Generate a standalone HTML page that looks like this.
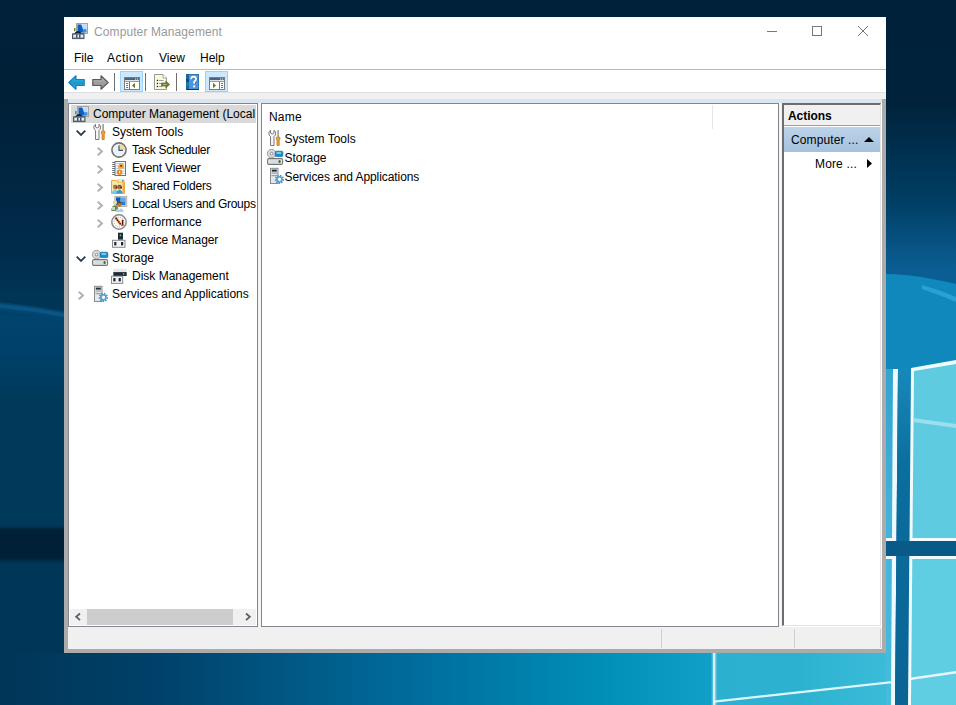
<!DOCTYPE html>
<html><head><meta charset="utf-8">
<style>
*{margin:0;padding:0;box-sizing:border-box}
html,body{width:956px;height:705px;overflow:hidden}
body{position:relative;font-family:"Liberation Sans",sans-serif;font-size:12px;color:#000;background:#003a5a}
.a{position:absolute}
.t{position:absolute;white-space:nowrap;line-height:14px;height:14px}
svg.i{position:absolute;overflow:visible}
</style></head><body>
<!-- BACKGROUND -->
<svg class="a" style="left:0;top:0" width="956" height="705" viewBox="0 0 956 705">
<defs>
<linearGradient id="gl" x1="0" y1="0" x2="0" y2="705" gradientUnits="userSpaceOnUse">
<stop offset="0" stop-color="#00213a"/>
<stop offset="0.142" stop-color="#002038"/>
<stop offset="0.355" stop-color="#002c4c"/>
<stop offset="0.43" stop-color="#003556"/>
<stop offset="0.45" stop-color="#00446e"/>
<stop offset="0.5" stop-color="#00406a"/>
<stop offset="0.567" stop-color="#003a5a"/>
<stop offset="0.745" stop-color="#003a5a"/>
<stop offset="0.752" stop-color="#002038"/>
<stop offset="0.79" stop-color="#002038"/>
<stop offset="0.8" stop-color="#003658"/>
<stop offset="1" stop-color="#003658"/>
</linearGradient>
<linearGradient id="gb" x1="0" y1="0" x2="886" y2="0" gradientUnits="userSpaceOnUse">
<stop offset="0" stop-color="#003658"/>
<stop offset="0.169" stop-color="#004068"/>
<stop offset="0.463" stop-color="#006c9c"/>
<stop offset="0.688" stop-color="#0090b8"/>
<stop offset="0.8036" stop-color="#10a0c8"/>
<stop offset="0.806" stop-color="#2cb0d0"/>
<stop offset="0.903" stop-color="#2cb2d0"/>
<stop offset="1" stop-color="#3abcd8"/>
</linearGradient>
<linearGradient id="gr" x1="0" y1="0" x2="0" y2="705" gradientUnits="userSpaceOnUse">
<stop offset="0" stop-color="#00213a"/>
<stop offset="0.142" stop-color="#00223a"/>
<stop offset="0.284" stop-color="#003e64"/>
<stop offset="0.37" stop-color="#0a5a8e"/>
<stop offset="0.39" stop-color="#0a5e94"/>
<stop offset="1" stop-color="#0a5e94"/>
</linearGradient>
<linearGradient id="lp" x1="0" y1="369" x2="0" y2="705" gradientUnits="userSpaceOnUse"><stop offset="0" stop-color="#34a4d0"/><stop offset="0.5" stop-color="#44b4dc"/><stop offset="1" stop-color="#48bcdc"/></linearGradient>
<linearGradient id="gap" x1="0" y1="369" x2="0" y2="705" gradientUnits="userSpaceOnUse"><stop offset="0" stop-color="#1888b8"/><stop offset="0.3" stop-color="#0a6e9e"/><stop offset="1" stop-color="#0a6494"/></linearGradient>
</defs>
<rect x="0" y="0" width="956" height="705" fill="#00213a"/>
<rect x="0" y="0" width="64" height="705" fill="url(#gl)"/>
<path d="M0 302 Q32 305 64 311 L64 320 Q32 314 0 311Z" fill="#00466e"/>
<path d="M0 304 Q32 307 64 313 L64 317 Q32 311 0 308Z" fill="#0a5584"/>
<path d="M0 290 L64 290 L64 311 Q32 305 0 302Z" fill="#003556"/>
<rect x="0" y="653" width="886" height="52" fill="url(#gb)"/>
<rect x="886" y="0" width="70" height="705" fill="url(#gr)"/>
<!-- streak on right -->
<path d="M886 274 Q915 274 956 284 L956 369 L886 369Z" fill="#1088bc"/>
<path d="M922 285 Q940 290 956 297 L956 302 Q940 295 922 289Z" fill="#30a8d8" opacity="0.8"/>
<!-- logo: left pane strip -->
<path d="M886 369 L895 369 L892 705 L886 705Z" fill="url(#lp)"/>
<path d="M893 369 L898 369 L895 705 L891 705Z" fill="#eefaff"/>
<!-- dark gap -->
<path d="M898 369 L911 369 L908 705 L895 705Z" fill="url(#gap)"/>
<!-- right panes -->
<path d="M911 368 L956 360 L956 541 L909.5 541Z" fill="#f0fbff"/>
<path d="M914 371 L956 364 L956 538 L912.5 538Z" fill="#5ecbe0"/>
<path d="M909.3 556 L956 556 L956 705 L908 705Z" fill="#f0fbff"/>
<path d="M912.3 559 L956 559 L956 705 L911 705Z" fill="#5fcde2"/>
<path d="M913 418 L956 424 L956 428 L913 422Z" fill="#a8e4f0" opacity="0.8"/>
<path d="M911 677.5 L956 671 L956 673.5 L911 680Z" fill="#e8f8ff"/>
<path d="M886 538 L895.6 538 L895.6 541 L886 541Z" fill="#eefaff"/>
<path d="M886 556 L895.6 556 L895.6 559 L886 559Z" fill="#eefaff"/>
<rect x="886" y="541" width="70" height="15" fill="#0a5a88"/>
<!-- bottom lines -->
<rect x="713" y="653" width="2.2" height="52" fill="#e0f6ff"/><rect x="711.5" y="653" width="5.2" height="52" fill="#c0ecf8" opacity="0.35"/>
<path d="M714 700.6 L892 681 L892 683.2 L714 702.8Z" fill="#e0f6ff"/>
</svg>

<!-- WINDOW -->
<div class="a" style="left:64px;top:17px;width:822px;height:636px;background:#fff"></div>
<!-- title -->
<svg class="i" style="left:72px;top:23px" width="16" height="16" viewBox="0 0 16 16">
<rect x="4.5" y="0.5" width="11" height="10" fill="#e4e0dc" stroke="#aaa29a"/>
<rect x="5.5" y="1.5" width="9" height="8" fill="#b4e2fa"/>
<path d="M5.5 1.5H9.2L12.2 9.5H5.5Z" fill="#0c5cc6"/>
<rect x="10.8" y="6.2" width="3.7" height="3.3" fill="#3890e0"/>
<rect x="2" y="5" width="1.5" height="3.2" fill="#6a8a3a"/>
<path d="M2.6 11.2Q6 6.6 9.4 11.2" stroke="#0a1a30" stroke-width="1.7" fill="none"/>
<rect x="0.5" y="10.8" width="11.5" height="4.8" fill="#9aa6b0" stroke="#4c5660"/>
<rect x="1.5" y="12" width="9.5" height="2.2" fill="#e6ecf0"/>
<rect x="4.1" y="11.6" width="1.3" height="3.2" fill="#1e4262"/><rect x="7.1" y="11.6" width="1.3" height="3.2" fill="#1e4262"/>
</svg>
<div class="t" style="left:94px;top:25px;color:#999;letter-spacing:0.1px">Computer Management</div>
<!-- caption buttons -->
<div class="a" style="left:767px;top:31px;width:10px;height:1px;background:#777"></div>
<div class="a" style="left:812px;top:26px;width:10px;height:10px;border:1px solid #777"></div>
<svg class="i" style="left:858px;top:26px" width="10" height="10"><path d="M0 0L10 10M10 0L0 10" stroke="#777" stroke-width="1"/></svg>
<!-- menu -->
<div class="t" style="left:74px;top:51px">File</div>
<div class="t" style="left:107px;top:51px;letter-spacing:0.5px">Action</div>
<div class="t" style="left:159px;top:51px">View</div>
<div class="t" style="left:200px;top:51px">Help</div>
<div class="a" style="left:64px;top:69px;width:822px;height:1px;background:#b9b9b9"></div>
<!-- toolbar -->
<svg class="i" style="left:68px;top:75px" width="17" height="15" viewBox="0 0 17 15">
<defs><linearGradient id="ba" x1="0" y1="0" x2="0" y2="1"><stop offset="0" stop-color="#40b8e0"/><stop offset="0.6" stop-color="#1898c8"/><stop offset="1" stop-color="#58c4ec"/></linearGradient></defs>
<path d="M0.8 7.5L8 0.8V4.5H16.2V10.5H8V14.2Z" fill="url(#ba)" stroke="#1a7cc8" stroke-width="1.2" stroke-linejoin="round"/>
</svg>
<svg class="i" style="left:92px;top:75px" width="17" height="15" viewBox="0 0 17 15">
<defs><linearGradient id="fa" x1="0" y1="0" x2="0" y2="1"><stop offset="0" stop-color="#b4b4b4"/><stop offset="1" stop-color="#8c8c8c"/></linearGradient></defs>
<path d="M16.2 7.5L9 0.8V4.5H0.8V10.5H9V14.2Z" fill="url(#fa)" stroke="#5a5a5a" stroke-width="1.2" stroke-linejoin="round"/>
</svg>
<div class="a" style="left:114px;top:73px;width:1px;height:18px;background:#6e6e6e"></div>
<div class="a" style="left:120px;top:71px;width:23px;height:21px;background:#cce8ff;border:1px solid #99d1ff"></div>
<svg class="i" style="left:124px;top:77px" width="16" height="13" viewBox="0 0 16 13">
<rect x="0.5" y="0.5" width="15" height="12" fill="#fff" stroke="#7c7c7c"/>
<rect x="1" y="1" width="14" height="2" fill="#4e6280"/>
<rect x="11" y="1.5" width="1.2" height="1" fill="#e8eef4"/><rect x="13" y="1.5" width="1.2" height="1" fill="#e8eef4"/>
<rect x="1" y="3" width="14" height="1" fill="#dde4ea"/>
<rect x="1" y="4" width="14" height="1" fill="#9a9a9a"/>
<rect x="5" y="5" width="1" height="7" fill="#5a78a0"/>
<rect x="2" y="6" width="2.2" height="1.1" rx="0.5" fill="#3a7896"/>
<rect x="2" y="8" width="2.2" height="1.1" rx="0.5" fill="#3a7896"/>
<rect x="2" y="10" width="2.2" height="1.1" rx="0.5" fill="#3a7896"/>
<path d="M8 8.5L11 5.7V11.3Z" fill="#687a1e"/>
</svg>
<div class="a" style="left:145px;top:73px;width:1px;height:18px;background:#6e6e6e"></div>
<svg class="i" style="left:154px;top:74px" width="16" height="16" viewBox="0 0 16 16">
<path d="M0.5 0.5H9L12.5 4V15.5H0.5Z" fill="#fcf9de" stroke="#9a9a94"/>
<path d="M9 0.5V4H12.5" fill="#fff" stroke="#a0a4b0"/>
<rect x="2.8" y="5.8" width="1.3" height="1.3" fill="#1a1e2a"/><rect x="2.8" y="8.8" width="1.3" height="1.3" fill="#1a1e2a"/><rect x="2.8" y="11.8" width="1.3" height="1.3" fill="#1a1e2a"/>
<path d="M5 6.5H9.5M5 9.5H8.5M5 12.5H8.5" stroke="#8a96a4" stroke-width="0.9"/>
<path d="M7.5 9H11.8V7L15.8 10.5L11.8 14V12H7.5Z" fill="#6e7e2a" stroke="#5a6a1c" stroke-width="0.6"/>
<rect x="9" y="10" width="3.5" height="1" fill="#b0b8a0"/>
</svg>
<div class="a" style="left:176px;top:73px;width:1px;height:18px;background:#6e6e6e"></div>
<svg class="i" style="left:186px;top:74px" width="13" height="16" viewBox="0 0 13 16">
<rect x="0" y="0" width="13" height="16" fill="#1a64a8"/>
<rect x="3" y="0.6" width="9.4" height="14.6" fill="#4a96dc"/>
<rect x="0" y="5" width="3" height="3" fill="#0a4a98"/>
<rect x="0" y="8" width="3" height="4" fill="#1a7aa0"/>
<rect x="0" y="15" width="13" height="1" fill="#0a3a70"/>
<path d="M5.2 5.2Q5.2 2.6 7.6 2.6Q10.1 2.6 10.1 5Q10.1 6.6 8.2 7.8V9.8" stroke="#5a6a80" stroke-width="1.8" fill="none" transform="translate(0.6 0.4)"/>
<path d="M5.2 5.2Q5.2 2.6 7.6 2.6Q10.1 2.6 10.1 5Q10.1 6.6 8.2 7.8V9.8" stroke="#fff" stroke-width="1.7" fill="none"/>
<rect x="7.2" y="11.4" width="2" height="2" fill="#fff"/>
</svg>
<div class="a" style="left:205px;top:71px;width:23px;height:21px;background:#cce8ff;border:1px solid #99d1ff"></div>
<svg class="i" style="left:209px;top:77px" width="16" height="13" viewBox="0 0 16 13">
<rect x="0.5" y="0.5" width="15" height="12" fill="#fff" stroke="#7c7c7c"/>
<rect x="1" y="1" width="14" height="2" fill="#4e6280"/>
<rect x="11" y="1.5" width="1.2" height="1" fill="#e8eef4"/><rect x="13" y="1.5" width="1.2" height="1" fill="#e8eef4"/>
<rect x="1" y="3" width="14" height="1" fill="#dde4ea"/>
<rect x="1" y="4" width="14" height="1" fill="#9a9a9a"/>
<rect x="10" y="5" width="1" height="7" fill="#5a78a0"/>
<rect x="12" y="6" width="2.2" height="1.1" rx="0.5" fill="#3a7896"/>
<rect x="12" y="8" width="2.2" height="1.1" rx="0.5" fill="#3a7896"/>
<rect x="12" y="10" width="2.2" height="1.1" rx="0.5" fill="#3a7896"/>
<path d="M4 5.7L7 8.5L4 11.3Z" fill="#687a1e"/>
</svg>
<div class="a" style="left:64px;top:92px;width:822px;height:1px;background:#e0e0e0"></div>
<div class="a" style="left:64px;top:93px;width:822px;height:6px;background:#f0f0f0"></div>
<!-- frame -->
<div class="a" style="left:64px;top:99px;width:822px;height:554px;background:#ababab"></div>
<div class="a" style="left:68px;top:99px;width:814px;height:4px;background:#dbe5ef"></div>
<div class="a" style="left:68px;top:103px;width:814px;height:546px;background:#f0f0f0"></div>
<div class="a" style="left:259px;top:103px;width:1px;height:524px;background:#fafafa"></div>
<div class="a" style="left:780px;top:103px;width:1px;height:524px;background:#fafafa"></div>
<!-- tree panel -->
<div class="a" style="left:68px;top:103px;width:190px;height:524px;border:1px solid #828790;background:#fff"></div>
<!-- middle panel -->
<div class="a" style="left:261px;top:103px;width:518px;height:524px;border:1px solid #828790;background:#fff"></div>
<!-- actions panel -->
<div class="a" style="left:782px;top:103px;width:100px;height:524px;background:#fff"></div>
<div class="a" style="left:782px;top:103px;width:99px;height:523px;border-left:2px solid #6d6d6d;border-top:2px solid #6d6d6d;border-right:1px solid #e3e3e3;border-bottom:1px solid #e3e3e3;background:#fff"></div>
<!-- status bar -->
<div class="a" style="left:68px;top:627px;width:814px;height:22px;background:#f0f0f0"></div>
<div class="a" style="left:661px;top:629px;width:1px;height:19px;background:#cfcfcf"></div>
<div class="a" style="left:794px;top:629px;width:1px;height:19px;background:#cfcfcf"></div>
<div class="a" style="left:880px;top:629px;width:1px;height:19px;background:#cfcfcf"></div>

<!-- tree items -->
<div class="a" style="left:70px;top:104px;width:186px;height:521px;overflow:hidden">
<div class="a" style="left:1px;top:1px;width:185px;height:18px;background:#d9d9d9"></div>
</div>
<div class="a" style="left:70px;top:104px;width:186px;height:505px;overflow:hidden">
<div class="t" style="left:23px;top:3px">Computer Management (Local</div>
<div class="t" style="left:42px;top:21px">System Tools</div>
<div class="t" style="left:62px;top:39px;letter-spacing:-0.3px">Task Scheduler</div>
<div class="t" style="left:62px;top:57px;letter-spacing:-0.16px">Event Viewer</div>
<div class="t" style="left:62px;top:75px;letter-spacing:-0.18px">Shared Folders</div>
<div class="t" style="left:62px;top:93px;letter-spacing:-0.26px">Local Users and Groups</div>
<div class="t" style="left:62px;top:111px;letter-spacing:0.1px">Performance</div>
<div class="t" style="left:62px;top:129px;letter-spacing:-0.08px">Device Manager</div>
<div class="t" style="left:42px;top:147px">Storage</div>
<div class="t" style="left:62px;top:165px">Disk Management</div>
<div class="t" style="left:42px;top:183px">Services and Applications</div>
</div>

<!-- tree icons -->
<svg class="i" style="left:73px;top:106px" width="16" height="16" viewBox="0 0 16 16">
<rect x="4.5" y="0.5" width="11" height="10" fill="#e4e0dc" stroke="#aaa29a"/>
<rect x="5.5" y="1.5" width="9" height="8" fill="#b4e2fa"/>
<path d="M5.5 1.5H9.2L12.2 9.5H5.5Z" fill="#0c5cc6"/>
<rect x="10.8" y="6.2" width="3.7" height="3.3" fill="#3890e0"/>
<rect x="2" y="5" width="1.5" height="3.2" fill="#6a8a3a"/>
<path d="M2.6 11.2Q6 6.6 9.4 11.2" stroke="#0a1a30" stroke-width="1.7" fill="none"/>
<rect x="0.5" y="10.8" width="11.5" height="4.8" fill="#9aa6b0" stroke="#4c5660"/>
<rect x="1.5" y="12" width="9.5" height="2.2" fill="#e6ecf0"/>
<rect x="4.1" y="11.6" width="1.3" height="3.2" fill="#1e4262"/><rect x="7.1" y="11.6" width="1.3" height="3.2" fill="#1e4262"/>
</svg>
<!-- chevron down system tools -->
<svg class="i" style="left:76px;top:130px" width="10" height="6" viewBox="0 0 10 6"><path d="M0.7 0.7L5 5L9.3 0.7" stroke="#2b3d4f" stroke-width="1.8" fill="none"/></svg>
<!-- wrench -->
<svg class="i" style="left:93px;top:124px" width="16" height="16" viewBox="0 0 16 16">
<path d="M2.5 15.5V6.5Q0.8 5.5 0.8 3.2Q0.8 1.2 2.5 0.3V3L4.2 4L6 3V0.3Q7.7 1.2 7.7 3.2Q7.7 5.5 6 6.5V15.5Z" fill="#f4f4f4" stroke="#7a7a7a" stroke-width="1"/>
<rect x="9.5" y="0" width="1.2" height="7" fill="#7a7a7a"/>
<path d="M8.3 7.2H11.9V9.5L11.2 10V15.5H9V10L8.3 9.5Z" fill="#f0a030" stroke="#c87818" stroke-width="0.8"/>
</svg>
<!-- chevron right (grey) task scheduler -->
<svg class="i" style="left:97px;top:147px" width="6" height="9" viewBox="0 0 6 9"><path d="M0.7 0.7L5 4.5L0.7 8.3" stroke="#b0b0b0" stroke-width="1.9" fill="none"/></svg>
<svg class="i" style="left:111px;top:142px" width="16" height="16" viewBox="0 0 16 16">
<circle cx="8" cy="8" r="7.1" fill="#eaf2fa" stroke="#737373" stroke-width="1.6"/>
<path d="M8 8V2A6 6 0 0 1 14 8Z" fill="#f2dc90"/>
<path d="M8 3.5V8.3H12" stroke="#3a5a80" stroke-width="1.2" fill="none"/>
</svg>
<svg class="i" style="left:97px;top:165px" width="6" height="9" viewBox="0 0 6 9"><path d="M0.7 0.7L5 4.5L0.7 8.3" stroke="#b0b0b0" stroke-width="1.9" fill="none"/></svg>
<svg class="i" style="left:111px;top:160px" width="16" height="16" viewBox="0 0 16 16">
<rect x="3.5" y="1" width="11.5" height="15" fill="#5a7a9c"/>
<rect x="4.5" y="2" width="9.5" height="13" fill="#f4f8fc"/>
<path d="M5 3.5H13.5M5 6H13.5M5 8.5H13.5M5 11H13.5M5 13.5H13.5" stroke="#b8d4ec" stroke-width="1.1"/>
<path d="M1.2 2.5H4M1.2 4.5H4M1.2 6.5H4M1.2 8.5H4M1.2 10.5H4M1.2 12.5H4M1.2 14.5H4" stroke="#6a6e72" stroke-width="1.1"/>
<path d="M7 8.6Q7 3 10.2 3Q13.2 3 13.2 8.6Z" fill="#f0a838"/>
<circle cx="10.2" cy="5.8" r="0.9" fill="#5a0a10"/>
<circle cx="8.6" cy="12.2" r="2.7" fill="#e88418"/>
<rect x="8.1" y="11" width="1.1" height="2.4" fill="#f8f8ff"/>
</svg>
<svg class="i" style="left:97px;top:183px" width="6" height="9" viewBox="0 0 6 9"><path d="M0.7 0.7L5 4.5L0.7 8.3" stroke="#b0b0b0" stroke-width="1.9" fill="none"/></svg>
<svg class="i" style="left:111px;top:178px" width="16" height="16" viewBox="0 0 16 16">
<path d="M0.5 2.5H5.5L6.5 4H13.5V15.5H0.5Z" fill="#f8e6a8" stroke="#e8a848"/>
<rect x="6.5" y="1.5" width="7" height="2.8" fill="#f4c060"/>
<rect x="8" y="2.3" width="3" height="1.2" fill="#fff"/><rect x="11" y="2.3" width="1.5" height="1.2" fill="#2a80d8"/>
<rect x="11.5" y="5" width="1.5" height="10" fill="#f0b050"/>
<circle cx="4.2" cy="9.6" r="2" fill="#b07828"/>
<path d="M2.2 8.4Q4 6.4 6 8" stroke="#707880" stroke-width="1.2" fill="none"/>
<circle cx="5.8" cy="9.5" r="0.9" fill="#6a0a20"/>
<circle cx="8.4" cy="9.6" r="2" fill="#b07828"/>
<path d="M6.6 8.4Q8.4 6.4 10.4 8" stroke="#505860" stroke-width="1.2" fill="none"/>
<circle cx="10.2" cy="9.5" r="0.9" fill="#6a0a20"/>
<path d="M1 15.5Q1 12 4.2 12Q7 12 7 15.5Z" fill="#7ac8e8"/>
<path d="M5.5 15.5Q5.5 12 8.5 12Q11.5 12 11.5 15.5Z" fill="#3a98d0"/>
</svg>
<svg class="i" style="left:97px;top:201px" width="6" height="9" viewBox="0 0 6 9"><path d="M0.7 0.7L5 4.5L0.7 8.3" stroke="#b0b0b0" stroke-width="1.9" fill="none"/></svg>
<svg class="i" style="left:111px;top:196px" width="16" height="16" viewBox="0 0 16 16">
<rect x="3.8" y="0.4" width="12" height="10" fill="#d4d4d0" stroke="#a8a8a4" stroke-width="0.8"/>
<rect x="5" y="1.6" width="9.6" height="7.6" fill="#5aa8e8"/>
<path d="M5 1.6H9.5L8 9.2H5Z" fill="#0a58c0"/>
<rect x="10" y="6" width="4" height="3" fill="#2a78d8"/>
<circle cx="4" cy="6.4" r="2.2" fill="#f0d890"/>
<path d="M0.3 15Q0.3 9.6 4 9.6Q7 9.6 7.2 13V15Z" fill="#6a8a48"/>
<rect x="1" y="11" width="3" height="3" fill="#c8d0c8"/>
<circle cx="8.4" cy="8.6" r="2.3" fill="#c87828"/>
<path d="M6.2 7.6Q8 5.2 10.4 7" stroke="#4a4a40" stroke-width="1.4" fill="none"/>
<path d="M4.6 16Q4.6 12.2 8.6 12.2Q12.6 12.2 12.6 16Z" fill="#a8d0f0"/>
<path d="M7.6 12.2L8.6 14.5L9.6 12.2Z" fill="#fff"/>
</svg>
<svg class="i" style="left:97px;top:219px" width="6" height="9" viewBox="0 0 6 9"><path d="M0.7 0.7L5 4.5L0.7 8.3" stroke="#b0b0b0" stroke-width="1.9" fill="none"/></svg>
<svg class="i" style="left:111px;top:214px" width="16" height="16" viewBox="0 0 16 16">
<circle cx="8" cy="8" r="7.2" fill="#fbfbfb" stroke="#8a8a8a" stroke-width="1.5"/>
<circle cx="8" cy="8" r="4.8" fill="none" stroke="#9aa0a8" stroke-width="1" stroke-dasharray="0.9 1.2"/>
<path d="M4.4 3.2L9.8 10.6" stroke="#f09020" stroke-width="2.4"/>
<path d="M4.8 3.8L9.6 10.4" stroke="#5a0c10" stroke-width="1.4" stroke-dasharray="1.6 0.6"/>
<path d="M11.6 5.8V11.2H10.4" stroke="#5a0c10" stroke-width="1.5" fill="none"/>
<rect x="10.2" y="10.6" width="1.5" height="1.2" fill="#f09020"/>
</svg>
<svg class="i" style="left:111px;top:232px" width="16" height="16" viewBox="0 0 16 16">
<rect x="7" y="0.7" width="5" height="7" fill="#1e2c3c"/>
<circle cx="9.4" cy="3.4" r="0.8" fill="#a8d040"/>
<rect x="1.5" y="8.3" width="12.5" height="7" fill="#f2f4f6" stroke="#8a8a8a"/>
<rect x="3.2" y="10" width="2.2" height="3.4" fill="#1a2838"/>
<rect x="10" y="10" width="2.2" height="3.4" fill="#1a2838"/>
</svg>
<!-- storage chevron down -->
<svg class="i" style="left:76px;top:256px" width="10" height="6" viewBox="0 0 10 6"><path d="M0.7 0.7L5 5L9.3 0.7" stroke="#2b3d4f" stroke-width="1.8" fill="none"/></svg>
<svg class="i" style="left:92px;top:250px" width="16" height="16" viewBox="0 0 16 16">
<circle cx="4.6" cy="4.6" r="4.3" fill="#d8d8d8" stroke="#9a9a9a" stroke-width="0.9"/>
<circle cx="4.6" cy="4.6" r="1.3" fill="#fff" stroke="#505860" stroke-width="0.6"/>
<rect x="8.2" y="2.2" width="7.6" height="5.4" rx="1.2" fill="#1a8ec8" stroke="#0a68a0" stroke-width="0.7"/>
<rect x="9.5" y="3.2" width="4.5" height="1.6" fill="#8ad8f8"/>
<rect x="0.6" y="9.6" width="15" height="5.8" rx="1.4" fill="#e4eaf0" stroke="#747474" stroke-width="1.1"/>
<rect x="2.5" y="11" width="9" height="3" fill="#d4dce4"/>
<ellipse cx="12.6" cy="12.5" rx="1.2" ry="1.6" fill="#4a6a20"/>
</svg>
<svg class="i" style="left:111px;top:268px" width="16" height="16" viewBox="0 0 16 16">
<rect x="2.3" y="0.8" width="13.4" height="3.6" fill="#e6e8ea"/>
<rect x="2.3" y="4.1" width="13.4" height="3.9" fill="#1e2c3c"/>
<circle cx="12.6" cy="6.1" r="0.8" fill="#a8d040"/>
<rect x="0.5" y="8.2" width="11.2" height="7.2" fill="#f2f4f6" stroke="#8a8a8a"/>
<rect x="2.3" y="10" width="2.2" height="3.4" fill="#1a2838"/>
<rect x="7.6" y="10" width="2.2" height="3.4" fill="#1a2838"/>
</svg>
<svg class="i" style="left:78px;top:291px" width="6" height="9" viewBox="0 0 6 9"><path d="M0.7 0.7L5 4.5L0.7 8.3" stroke="#b0b0b0" stroke-width="1.9" fill="none"/></svg>
<svg class="i" style="left:92px;top:286px" width="16" height="16" viewBox="0 0 16 16">
<rect x="2.5" y="0.3" width="7.5" height="15.2" fill="#e4e8ec" stroke="#8a8c90"/>
<rect x="3.8" y="1.6" width="5" height="2" fill="#1e2c3c"/>
<rect x="3.5" y="4.5" width="5.5" height="1.2" fill="#9aa0a8"/>
<rect x="3.5" y="7" width="5.5" height="1.2" fill="#9aa0a8"/>
<circle cx="11.4" cy="11.3" r="3.4" fill="none" stroke="#4a98c8" stroke-width="2.6" stroke-dasharray="1.3 1"/>
<circle cx="11.4" cy="11.3" r="2.6" fill="none" stroke="#5aa0d0" stroke-width="1.6"/>
<circle cx="11.4" cy="11.3" r="1.3" fill="#fff"/>
</svg>

<!-- scrollbar -->
<div class="a" style="left:70px;top:609px;width:186px;height:16px;background:#f0f0f0"></div>
<div class="a" style="left:87px;top:609px;width:146px;height:16px;background:#cdcdcd"></div>
<svg class="i" style="left:75px;top:613px" width="6" height="8" viewBox="0 0 6 8"><path d="M5 0.5L1.2 3.8L5 7.1" stroke="#606060" stroke-width="1.8" fill="none"/></svg>
<svg class="i" style="left:245px;top:613px" width="6" height="8" viewBox="0 0 6 8"><path d="M1 0.5L4.8 3.8L1 7.1" stroke="#606060" stroke-width="1.8" fill="none"/></svg>

<!-- middle -->
<div class="t" style="left:269px;top:110px;letter-spacing:0.2px">Name</div>
<div class="a" style="left:712px;top:105px;width:1px;height:24px;background:#e5e5e5"></div>
<svg class="i" style="left:268px;top:130px" width="16" height="16" viewBox="0 0 16 16">
<path d="M2.5 15.5V6.5Q0.8 5.5 0.8 3.2Q0.8 1.2 2.5 0.3V3L4.2 4L6 3V0.3Q7.7 1.2 7.7 3.2Q7.7 5.5 6 6.5V15.5Z" fill="#f4f4f4" stroke="#7a7a7a" stroke-width="1"/>
<rect x="9.5" y="0" width="1.2" height="7" fill="#7a7a7a"/>
<path d="M8.3 7.2H11.9V9.5L11.2 10V15.5H9V10L8.3 9.5Z" fill="#f0a030" stroke="#c87818" stroke-width="0.8"/>
</svg>
<svg class="i" style="left:267px;top:149px" width="16" height="16" viewBox="0 0 16 16">
<circle cx="4.6" cy="4.6" r="4.3" fill="#d8d8d8" stroke="#9a9a9a" stroke-width="0.9"/>
<circle cx="4.6" cy="4.6" r="1.3" fill="#fff" stroke="#505860" stroke-width="0.6"/>
<rect x="8.2" y="2.2" width="7.6" height="5.4" rx="1.2" fill="#1a8ec8" stroke="#0a68a0" stroke-width="0.7"/>
<rect x="9.5" y="3.2" width="4.5" height="1.6" fill="#8ad8f8"/>
<rect x="0.6" y="9.6" width="15" height="5.8" rx="1.4" fill="#e4eaf0" stroke="#747474" stroke-width="1.1"/>
<rect x="2.5" y="11" width="9" height="3" fill="#d4dce4"/>
<ellipse cx="12.6" cy="12.5" rx="1.2" ry="1.6" fill="#4a6a20"/>
</svg>
<svg class="i" style="left:268px;top:168px" width="16" height="16" viewBox="0 0 16 16">
<rect x="2.5" y="0.3" width="7.5" height="15.2" fill="#e4e8ec" stroke="#8a8c90"/>
<rect x="3.8" y="1.6" width="5" height="2" fill="#1e2c3c"/>
<rect x="3.5" y="4.5" width="5.5" height="1.2" fill="#9aa0a8"/>
<rect x="3.5" y="7" width="5.5" height="1.2" fill="#9aa0a8"/>
<circle cx="11.4" cy="11.3" r="3.4" fill="none" stroke="#4a98c8" stroke-width="2.6" stroke-dasharray="1.3 1"/>
<circle cx="11.4" cy="11.3" r="2.6" fill="none" stroke="#5aa0d0" stroke-width="1.6"/>
<circle cx="11.4" cy="11.3" r="1.3" fill="#fff"/>
</svg>
<div class="t" style="left:284.5px;top:132px">System Tools</div>
<div class="t" style="left:284.5px;top:151px">Storage</div>
<div class="t" style="left:284.5px;top:170px;letter-spacing:-0.08px">Services and Applications</div>

<!-- actions -->
<div class="a" style="left:784px;top:105px;width:96px;height:20px;background:#f0f0f0"></div>
<div class="a" style="left:784px;top:125px;width:96px;height:1px;background:#a0a0a0"></div>
<div class="a" style="left:784px;top:127px;width:96px;height:25px;background:linear-gradient(#bdd3e9,#a4c1de)"></div>
<div class="t" style="left:788px;top:109px;font-weight:bold;letter-spacing:-0.05px">Actions</div>
<div class="t" style="left:791px;top:133px;letter-spacing:0.12px">Computer ...</div>
<div class="t" style="left:815px;top:157px;letter-spacing:0.15px">More ...</div>
<svg class="i" style="left:864px;top:137px" width="10" height="5"><path d="M0 5L5 0L10 5Z" fill="#000"/></svg>
<svg class="i" style="left:867px;top:159px" width="5" height="9"><path d="M0 0L5 4.5L0 9Z" fill="#000"/></svg>
</body></html>
